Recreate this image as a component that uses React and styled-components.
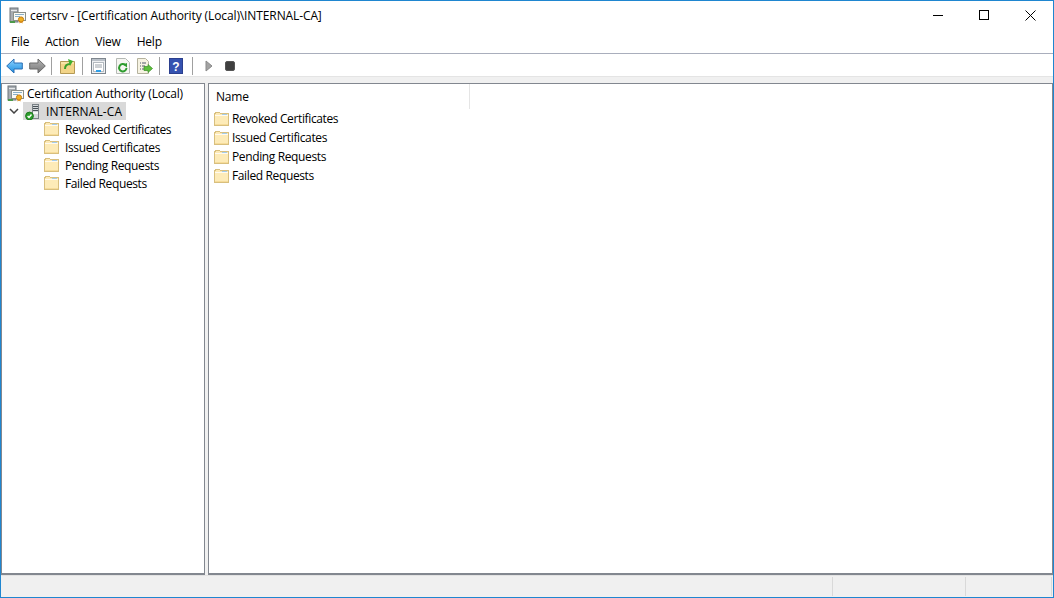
import React from "react";
import styled, { createGlobalStyle } from "styled-components";

const Global = createGlobalStyle`
  html, body { margin: 0; padding: 0; background: #fff; }
  #root { width: 1054px; height: 598px; overflow: hidden; }
`;
const Win = styled.div`
  box-sizing: border-box; width: 1054px; height: 598px;
  border: 1px solid #1f86d0; display: flex; flex-direction: column;
  font-family: "Open Sans", "Noto Sans", sans-serif; font-size: 12px; color: #000; background: #fff;
`;
const TitleBar = styled.div`
  height: 29px; display: flex; align-items: center; padding-left: 8px; flex: none;
`;
const TitleText = styled.span`
  margin-left: 4px; font-size: 12px; letter-spacing: -0.11px; white-space: nowrap;
`;
const WinButtons = styled.div`
  margin-left: auto; display: flex; height: 100%;
`;
const WinBtn = styled.div`
  width: 46px; height: 28px; display: flex; align-items: center; justify-content: center;
`;
const MenuBar = styled.div`
  box-sizing: border-box; height: 24px; display: flex; align-items: center; padding-left: 10px; gap: 16px; flex: none;
  border-bottom: 1px solid #a9aebc; letter-spacing: -0.2px;
`;
const ToolBar = styled.div`
  box-sizing: border-box; height: 22px; display: flex; align-items: center; padding: 2px 0 0 4px; flex: none;
`;
const ToolSlot = styled.span`
  display: flex; width: ${p => p.$w}px; justify-content: center; align-items: center; height: 20px;
`;
const Sep = styled.span`
  width: 1px; height: 18px; background: #a0a0a0; flex: none;
`;
const Panes = styled.div`
  flex: 1; min-height: 0; display: flex; background: #f0f0f0; gap: 3px; padding-top: 6px;
  border-top: 1px solid #e4e4e4;
`;
const Pane = styled.div`
  box-sizing: border-box; background: #fff; border: 1px solid #82878f; border-bottom-width: 2px;
  width: ${p => p.$w ? p.$w + "px" : "auto"}; flex: ${p => p.$w ? "none" : 1};
`;
const TreeRoot = styled.div`
  height: 18px; display: flex; align-items: center; padding-left: 5px; gap: 3px;
  letter-spacing: -0.2px; white-space: nowrap;
`;
const TreeCa = styled.div`
  height: 18px; display: flex; align-items: center; padding-left: 7px;
`;
const Selected = styled.div`
  display: flex; align-items: center; height: 18px; background: #d9d9d9; width: 103px; padding-left: 2px; gap: 5px; margin-left: 4px;
  letter-spacing: 0.1px; box-sizing: border-box;
`;
const TreeList = styled.div`
  padding-left: 42px;
`;
const FolderRow = styled.div`
  height: ${p => p.$h}px; display: flex; align-items: center; gap: ${p => p.$gap}px; white-space: nowrap; letter-spacing: -0.37px;
`;
const Header = styled.div`
  height: 25px; display: flex; align-items: center; padding-left: 7px; letter-spacing: -0.2px;
`;
const HeadCell = styled.div`
  width: 254px; height: 25px; display: flex; align-items: center; border-right: 1px solid #e5e5e5; padding-bottom: 1px; box-sizing: border-box;
`;
const List = styled.div`
  padding-left: 5px;
`;
const StatusBar = styled.div`
  height: 22px; flex: none; background: #f0f0f0; border-top: 1px solid #e2e2e2; display: flex; justify-content: flex-end; align-items: stretch; box-sizing: border-box; padding: 1px 1px 1px 0;
`;
const StatusCell = styled.div`
  width: ${p => p.$w}px; border-left: 1px solid #d9d9d9; box-sizing: border-box; &:last-child { border-right: 1px solid #d9d9d9; }
`;

const Folder = () => (
  <svg width="15" height="14" viewBox="0 0 15 14" shapeRendering="crispEdges">
    <path d="M.5 2.500V13.500h14V1.500H6.500L5.500 .5H1.500Z" fill="#fdeab6" stroke="#d8bf7e" />
    <rect x="1" y="4" width="13" height="9" fill="#fdebb8" />
    <rect x="1" y="3" width="13" height="1" fill="#fffaf0" />
    <rect x="8" y="2" width="5" height="1" fill="#a5cdea" />
    <rect x="1" y="12" width="13" height="1" fill="#f6dc9a" />
  </svg>
);
const CertIcon = () => (
  <svg width="17" height="17" viewBox="0 0 17 17">
    <rect x="1" y="1" width="8" height="14" fill="#a8adb2" stroke="#6d747a" />
    <rect x="2" y="3" width="6" height="1" fill="#e6e8ea" />
    <rect x="1" y="14" width="5" height="2" fill="#4c9a4a" />
    <rect x="4.500" y="5.500" width="12" height="8" fill="#fbfbf5" stroke="#8a8f88" />
    <path d="M6 7.500h9M6 9.500h5" stroke="#8ab0c8" />
    <circle cx="12" cy="12.500" r="2.600" fill="#f0b020" stroke="#c77d10" />
    <path d="M10.500 14.500v2l1.500-1 1.500 1v-2" fill="#d78a1c" />
  </svg>
);
const ServerIcon = () => (
  <svg width="16" height="18" viewBox="0 0 16 18">
    <rect x="7.500" y="2.500" width="6" height="14" fill="#d4d8da" stroke="#7a8186" />
    <rect x="8" y="4" width="5" height="1" fill="#4a5258" />
    <rect x="8" y="6" width="5" height="1" fill="#4a5258" />
    <rect x="8" y="8" width="5" height="1" fill="#4a5258" />
    <rect x="8" y="10" width="5" height="2" fill="#f4f5f5" />
    <circle cx="4.500" cy="14" r="3.900" fill="#2e9e2e" stroke="#1f7a1f" />
    <path d="M2.600 14l1.400 1.500 2.500-3" fill="none" stroke="#fff" strokeWidth="1.400" />
  </svg>
);
const Chevron = () => (
  <svg width="10" height="6" viewBox="0 0 10 6"><path d="M1 1l4 4 4-4" fill="none" stroke="#444" strokeWidth="1.500" /></svg>
);
const Back = () => (
  <svg width="17" height="16" viewBox="0 0 17 16">
    <defs><linearGradient id="bk" x1="0" y1="0" x2="0" y2="1"><stop offset="0" stopColor="#8fd3ff" /><stop offset="1" stopColor="#1b8ee0" /></linearGradient></defs>
    <path d="M.7 8L8 1v4h8.300v6H8v4Z" fill="url(#bk)" stroke="#2a6fb5" />
  </svg>
);
const Fwd = () => (
  <svg width="17" height="16" viewBox="0 0 17 16">
    <defs><linearGradient id="fw" x1="0" y1="0" x2="0" y2="1"><stop offset="0" stopColor="#b5b5b5" /><stop offset="1" stopColor="#777" /></linearGradient></defs>
    <path d="M16.300 8L9 1v4H.7v6H9v4Z" fill="url(#fw)" stroke="#6a6a6a" />
  </svg>
);
const Up = () => (
  <svg width="15" height="16" viewBox="0 0 15 16">
    <path d="M.5 3.500V15.500h14V3.500Z" fill="#f2d488" stroke="#b59a55" />
    <path d="M1 5h13" stroke="#fff2c4" />
    <path d="M5 11c0-3 2-5 5-5" fill="none" stroke="#3aa02a" strokeWidth="2" />
    <path d="M8 1l5 2-3 5Z" fill="#3fae2e" />
  </svg>
);
const Props = () => (
  <svg width="15" height="16" viewBox="0 0 15 16">
    <rect x=".5" y=".5" width="14" height="15" fill="#eef0f2" stroke="#7e868e" />
    <rect x="1" y="1" width="13" height="2" fill="#b9c0c8" />
    <rect x="2.500" y="4.500" width="10" height="9" fill="#fff" stroke="#b4bac0" />
    <path d="M4 7h7M4 9h7" stroke="#9aa2aa" />
    <rect x="5" y="12" width="5" height="2" fill="#2f9fe8" />
  </svg>
);
const Refresh = () => (
  <svg width="14" height="16" viewBox="0 0 14 16">
    <path d="M.5.500h9l4 4v11H.5Z" fill="#f6f6f2" stroke="#b5b9b5" />
    <path d="M10.500 10a3.700 3.700 0 1 1-1.200-3" fill="none" stroke="#2f9c2f" strokeWidth="2" />
    <path d="M7 6.500l4-1.500v4.500Z" fill="#2f9c2f" />
  </svg>
);
const Export = () => (
  <svg width="16" height="16" viewBox="0 0 16 16">
    <path d="M.5.500h8l3 3v12H.5Z" fill="#f6f3e2" stroke="#b5b29e" />
    <path d="M3 5h1M5 5h4M3 8h1M5 8h3M3 11h1M5 11h2" stroke="#50586a" />
    <path d="M15.500 10.500L11 6.500v2H7v4h4v2Z" fill="#5cc03a" stroke="#3a8e28" strokeWidth=".7" />
  </svg>
);
const HelpIcon = () => (
  <svg width="14" height="16" viewBox="0 0 14 16">
    <rect x=".5" y=".5" width="13" height="15" fill="#3552b0" stroke="#2b3f8e" />
    <text x="7" y="12.500" textAnchor="middle" fontFamily="Liberation Sans, sans-serif" fontWeight="700" fontSize="12" fill="#fff">?</text>
  </svg>
);
const Play = () => (
  <svg width="8" height="12" viewBox="0 0 8 12"><path d="M1 1L7 6 1 11Z" fill="#a3a3a3" stroke="#8a8a8a" /></svg>
);
const Stop = () => (
  <svg width="10" height="10" viewBox="0 0 10 10"><rect x=".5" y=".5" width="9" height="9" rx="1.500" fill="#3f3f3f" stroke="#555" /></svg>
);

const items = ["Revoked Certificates", "Issued Certificates", "Pending Requests", "Failed Requests"];

export default function App() {
  return (
    <Win>
      <Global />
      <TitleBar>
        <CertIcon />
        <TitleText>certsrv - [Certification Authority (Local)\INTERNAL-CA]</TitleText>
        <WinButtons>
          <WinBtn>
            <svg width="10" height="10" viewBox="0 0 10 10" shapeRendering="crispEdges"><rect y="5" width="10" height="1" fill="#000" /></svg>
          </WinBtn>
          <WinBtn>
            <svg width="10" height="10" viewBox="0 0 10 10" shapeRendering="crispEdges"><rect x=".5" y=".5" width="9" height="9" fill="none" stroke="#000" /></svg>
          </WinBtn>
          <WinBtn>
            <svg width="11" height="11" viewBox="0 0 11 11"><path d="M.5.500l10 10M10.500.500l-10 10" stroke="#000" strokeWidth="1" /></svg>
          </WinBtn>
        </WinButtons>
      </TitleBar>
      <MenuBar>
        <span>File</span><span>Action</span><span>View</span><span>Help</span>
      </MenuBar>
      <ToolBar>
        <ToolSlot $w={18}><Back /></ToolSlot>
        <ToolSlot $w={28}><Fwd /></ToolSlot>
        <Sep />
        <ToolSlot $w={30}><Up /></ToolSlot>
        <Sep />
        <ToolSlot $w={31}><Props /></ToolSlot>
        <ToolSlot $w={17}><Refresh /></ToolSlot>
        <ToolSlot $w={28}><Export /></ToolSlot>
        <Sep />
        <ToolSlot $w={32}><HelpIcon /></ToolSlot>
        <Sep />
        <ToolSlot $w={31}><Play /></ToolSlot>
        <ToolSlot $w={12}><Stop /></ToolSlot>
      </ToolBar>
      <Panes>
        <Pane $w={204}>
          <TreeRoot><CertIcon />Certification Authority (Local)</TreeRoot>
          <TreeCa>
            <Chevron />
            <Selected><ServerIcon />INTERNAL-CA</Selected>
          </TreeCa>
          <TreeList>
            {items.map(t => <FolderRow key={t} $h={18} $gap={6}><Folder />{t}</FolderRow>)}
          </TreeList>
        </Pane>
        <Pane>
          <Header><HeadCell>Name</HeadCell></Header>
          <List>
            {items.map(t => <FolderRow key={t} $h={19} $gap={3}><Folder />{t}</FolderRow>)}
          </List>
        </Pane>
      </Panes>
      <StatusBar>
        <StatusCell $w={133} />
        <StatusCell $w={87} />
      </StatusBar>
    </Win>
  );
}
